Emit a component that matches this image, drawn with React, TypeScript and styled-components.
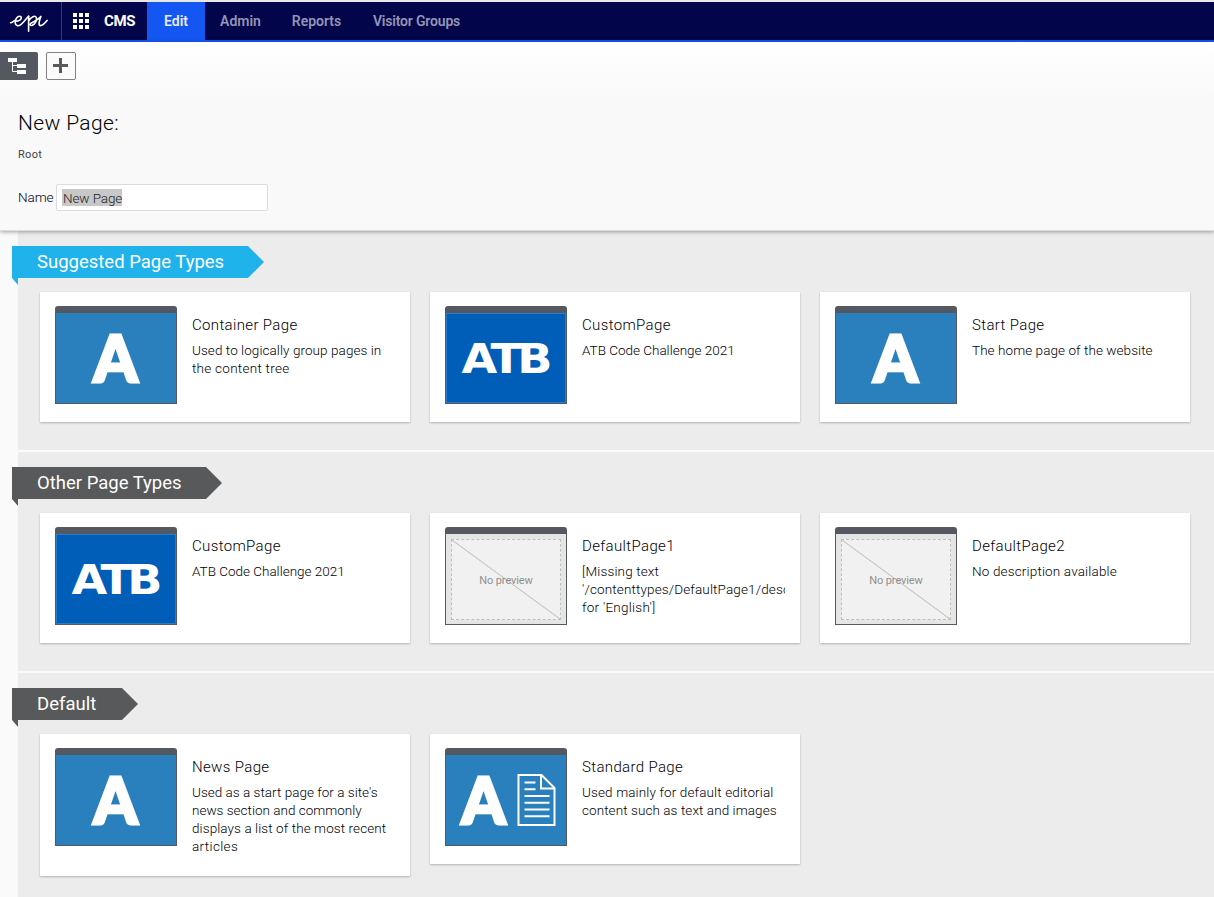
import React from "react";
import styled, { createGlobalStyle } from "styled-components";

const GlobalStyle = createGlobalStyle`
  * { box-sizing: border-box; }
  html, body { margin: 0; height: 100%; overflow: hidden; }
  body {
    background: #fafafa;
    font-family: Roboto, "Liberation Sans", sans-serif;
    color: #000008;
  }
`;

const Shell = styled.div`
  display: flex;
  flex-direction: column;
  height: 897px;
  overflow: hidden;
`;

const NavBar = styled.nav`
  display: flex;
  flex: none;
  height: 42px;
  border-top: 2px solid #e9e9ec;
  border-bottom: 2px solid #1456f1;
  background: #02054a;
`;

const LogoCell = styled.div`
  width: 62px;
  padding: 10px 0 0 9px;
  border-right: 1px solid #35386f;
`;

const ProductCell = styled.div`
  display: flex;
  align-items: center;
  width: 86px;
  padding-left: 11px;
  border-right: 1px solid #35386f;
  color: #fff;
  font-size: 15px;
  font-weight: 700;
  letter-spacing: -0.3px;
  gap: 15px;
`;

const NavItem = styled.a<{ $active?: boolean; $width: number; $track?: number }>`
  display: flex;
  align-items: center;
  justify-content: center;
  width: ${(p) => p.$width}px;
  margin-left: ${(p) => (p.$active ? -1 : 0)}px;
  background: ${(p) => (p.$active ? "#1456f1" : "transparent")};
  color: ${(p) => (p.$active ? "#e6ecff" : "#9394b5")};
  font-size: 14px;
  font-weight: 600;
  letter-spacing: ${(p) => p.$track ?? 0}px;
`;

const Header = styled.header`
  position: relative;
  z-index: 1;
  flex: none;
  height: 189px;
  padding-top: 10px;
  border-bottom: 1px solid #dcdcdc;
  background: linear-gradient(#ffffff, #f9f9f9 56px);
  box-shadow: 0 1px 4px rgba(0, 0, 0, 0.35);
`;

const Tools = styled.div`
  display: flex;
  gap: 8px;
  height: 28px;
`;

const TreeButton = styled.button`
  width: 38px;
  height: 28px;
  padding: 0;
  border: 0;
  border-radius: 0 2px 2px 0;
  background: #545961;
`;

const AddButton = styled.button`
  width: 30px;
  height: 28px;
  padding: 0;
  border: 1px solid #818181;
  border-radius: 2px;
  background: #fbfbfb;
`;

const Title = styled.h1`
  margin: 30px 0 0 18px;
  font-size: 21px;
  font-weight: 300;
  line-height: 26px;
  letter-spacing: 0.35px;
  color: #000;
`;

const Crumb = styled.div`
  margin: 12px 0 0 18px;
  font-size: 11px;
  line-height: 14px;
  letter-spacing: 0.3px;
  color: #444;
`;

const NameField = styled.label`
  display: flex;
  align-items: center;
  gap: 3px;
  height: 27px;
  margin: 22px 0 0 18px;
  font-size: 13.5px;
  font-weight: 300;
  letter-spacing: -0.1px;
  color: #000018;
`;

const NameCaption = styled.span`
  width: 35px;
  padding-bottom: 2px;
  white-space: nowrap;
`;

const NameInput = styled.div`
  display: flex;
  align-items: center;
  width: 212px;
  height: 27px;
  padding-left: 5px;
  border: 1px solid #dcdcdc;
  border-radius: 2px;
  background: #fff;
`;

const SelectedText = styled.span`
  width: 60px;
  height: 17px;
  padding-left: 1px;
  background: #c8c8c8;
  color: #222;
  line-height: 19px;
  white-space: nowrap;
`;

const Main = styled.main`
  flex: 1;
  min-height: 0;
  padding-left: 18px;
`;

const Section = styled.section`
  height: 221px;
  padding-top: 15px;
  border-bottom: 2px solid #fbfbfb;
  background: #ececec;

  &:last-child {
    height: 300px;
  }
`;

const Ribbon = styled.h2<{ $color: string; $width: number }>`
  width: ${(p) => p.$width}px;
  height: 39px;
  margin: 0 0 7px -6px;
  padding-left: 25px;
  background: ${(p) => p.$color};
  clip-path: polygon(
    0 0,
    calc(100% - 16px) 0,
    100% 16px,
    calc(100% - 16px) 32px,
    6px 32px,
    6px 39px,
    0 32px
  );
  color: #fff;
  font-size: 18.5px;
  font-weight: 400;
  line-height: 32px;
  white-space: nowrap;
`;

const CardGrid = styled.div`
  display: grid;
  grid-template-columns: repeat(3, 370px);
  align-items: start;
  gap: 20px;
  padding-left: 22px;
`;

const Card = styled.article`
  display: flex;
  align-items: flex-start;
  gap: 15px;
  min-height: 130px;
  padding: 14px 15px 18px;
  background: #fff;
  box-shadow: 0 1px 2px rgba(0, 0, 0, 0.25);
`;

const Thumb = styled.div<{ $fill: string }>`
  flex: none;
  width: 122px;
  height: 98px;
  border: 1px solid #545961;
  border-top-width: 7px;
  border-radius: 3px 3px 0 0;
  background: ${(p) => p.$fill};
`;

const CardText = styled.div`
  flex: 1;
  min-width: 0;
  overflow: hidden;
  padding: 9px 0 3px;
`;

const CardTitle = styled.h3`
  margin: 0 0 6px;
  font-size: 15px;
  font-weight: 300;
  line-height: 20px;
  letter-spacing: 0.35px;
`;

const CardLine = styled.div<{ $track: number }>`
  font-size: 13.5px;
  font-weight: 300;
  line-height: 18px;
  letter-spacing: ${(p) => p.$track}px;
  white-space: nowrap;
`;

const Drawing = styled.svg`
  display: block;
`;

const EmptyFrame = styled.div`
  display: grid;
  place-items: center;
  width: 110px;
  height: 81px;
  margin: 5px;
  padding-top: 2px;
  border: 1px dashed #bfbfbf;
  background: linear-gradient(
    to top right,
    #f1f1f1 calc(50% - 0.9px),
    #cbcbc8 calc(50% - 0.3px),
    #cbcbc8 calc(50% + 0.3px),
    #f1f1f1 calc(50% + 0.9px)
  );
  color: #909090;
  font-size: 11px;
  letter-spacing: -0.1px;
`;

const EpiLogo = () => (
  <Drawing width="42" height="20" viewBox="0 0 42 20" fill="none" stroke="#fff" strokeWidth="1.6" strokeLinecap="round" strokeLinejoin="round">
    <path d="M1.500 10.800c1.700 0 2.800-1.500 4.200-2.300M6 9.200c3.300-.1 6.300-1.300 6.300-3.500 0-2-3-1.900-4.700.3-2 2.700-2 7.300 1.100 7.700 4.200.4 7.500-6.900 10.900-9.200" />
    <path d="M19.600 4v15.200M19.600 9c2.400-4.400 6.600-6 7.700-3.500 1.100 2.800-1.300 7.200-4.200 7.900-1.900.4-2.600-1.200-1.300-2.100 2.700-1.400 6.900-3.200 10.100-6.900-1.500 4-2.900 8.700-.7 9.200 2.200.4 4.500-2.400 6.900-5.200" />
  </Drawing>
);

const AppGrid = () => (
  <Drawing width="16" height="16" viewBox="0 0 16 16" fill="#fff">
    {[0, 6, 12].map((y) => [0, 6, 12].map((x) => <rect key={`${x}-${y}`} x={x} y={y} width="4" height="4" />))}
  </Drawing>
);

const TreeIcon = () => (
  <Drawing width="38" height="28" viewBox="0 0 38 28">
    <path d="M8 6h9v4H8zM17 12h9v4h-9zM17 18h9v4h-9z" fill="#fff" />
    <path d="M12.500 10v9.500H17M12.500 13.500H17" stroke="#fff" fill="none" />
  </Drawing>
);

const PlusIcon = () => (
  <Drawing width="28" height="26" viewBox="0 0 28 26">
    <path d="M12 5h3v6h6v3h-6v6h-3v-6H6v-3h6z" fill="#58595b" />
  </Drawing>
);

const LetterMark = ({ x }: { x: number }) => (
  <text
    transform={`translate(${x} 68.500) scale(0.98 1)`}
    textAnchor="middle"
    fontFamily="Lato"
    fontWeight="900"
    fontSize="64"
    fill="#fff"
    stroke="#fff"
    strokeWidth="3"
  >
    A
  </text>
);

const LetterThumb = () => (
  <Thumb $fill="#2980bd">
    <Drawing width="120" height="90" viewBox="0 0 120 90">
      <LetterMark x={59.5} />
    </Drawing>
  </Thumb>
);

const ArticleThumb = () => (
  <Thumb $fill="#2980bd">
    <Drawing width="120" height="90" viewBox="0 0 120 90">
      <LetterMark x={37.5} />
      <g fill="none" stroke="#fff" strokeWidth="2">
        <path d="M72.500 20h23l13 13v37h-36z" />
        <path d="M95 20v13.500h13.500" />
        <path d="M78.500 27.500h11M78.500 34.200h11M78.500 41h25M78.500 47.700h25M78.500 54.500h25M78.500 61.200h25" />
      </g>
    </Drawing>
  </Thumb>
);

const AtbThumb = () => (
  <Thumb $fill="#005eb8">
    <Drawing width="120" height="90" viewBox="0 0 120 90">
      <rect x="0.500" y="0.500" width="119" height="89" fill="none" stroke="#2a7bc8" />
      <text x="13.700 39 62.500" y="60" transform="scale(1.14 1)" fontFamily="DejaVu Sans" fontWeight="700" fontSize="40.500" fill="#fff">
        ATB
      </text>
    </Drawing>
  </Thumb>
);

const EmptyThumb = () => (
  <Thumb $fill="#e5e5e5">
    <EmptyFrame>No preview</EmptyFrame>
  </Thumb>
);

const thumbs = { letter: LetterThumb, atb: AtbThumb, empty: EmptyThumb, article: ArticleThumb };

type PageType = {
  thumb: keyof typeof thumbs;
  title: string;
  lines: [string, number][];
};

type Group = { name: string; color: string; width: number; items: PageType[] };

const groups: Group[] = [
  {
    name: "Suggested Page Types",
    color: "#1fb2eb",
    width: 252,
    items: [
      {
        thumb: "letter",
        title: "Container Page",
        lines: [
          ["Used to logically group pages in", 0.07],
          ["the content tree", 0.27],
        ],
      },
      { thumb: "atb", title: "CustomPage", lines: [["ATB Code Challenge 2021", -0.01]] },
      { thumb: "letter", title: "Start Page", lines: [["The home page of the website", 0.07]] },
    ],
  },
  {
    name: "Other Page Types",
    color: "#58595b",
    width: 210,
    items: [
      { thumb: "atb", title: "CustomPage", lines: [["ATB Code Challenge 2021", -0.01]] },
      {
        thumb: "empty",
        title: "DefaultPage1",
        lines: [
          ["[Missing text", 0.15],
          ["'/contenttypes/DefaultPage1/description'", 0.14],
          ["for 'English']", 0.25],
        ],
      },
      { thumb: "empty", title: "DefaultPage2", lines: [["No description available", 0.16]] },
    ],
  },
  {
    name: "Default",
    color: "#58595b",
    width: 126,
    items: [
      {
        thumb: "letter",
        title: "News Page",
        lines: [
          ["Used as a start page for a site's", 0.02],
          ["news section and commonly", 0.01],
          ["displays a list of the most recent", 0.09],
          ["articles", 0.35],
        ],
      },
      {
        thumb: "article",
        title: "Standard Page",
        lines: [
          ["Used mainly for default editorial", 0.13],
          ["content such as text and images", 0.08],
        ],
      },
    ],
  },
];

const PageCard = ({ item }: { item: PageType }) => {
  const Picture = thumbs[item.thumb];
  return (
    <Card>
      <Picture />
      <CardText>
        <CardTitle>{item.title}</CardTitle>
        {item.lines.map(([text, track]) => (
          <CardLine key={text} $track={track}>
            {text}
          </CardLine>
        ))}
      </CardText>
    </Card>
  );
};

export default function App() {
  return (
    <Shell>
      <GlobalStyle />
      <NavBar>
        <LogoCell>
          <EpiLogo />
        </LogoCell>
        <ProductCell>
          <AppGrid />
          CMS
        </ProductCell>
        <NavItem $active $width={58}>Edit</NavItem>
        <NavItem $width={71}>Admin</NavItem>
        <NavItem $width={81}>Reports</NavItem>
        <NavItem $width={119} $track={-0.18}>Visitor Groups</NavItem>
      </NavBar>
      <Header>
        <Tools>
          <TreeButton aria-label="Toggle tree">
            <TreeIcon />
          </TreeButton>
          <AddButton aria-label="Add">
            <PlusIcon />
          </AddButton>
        </Tools>
        <Title>New Page:</Title>
        <Crumb>Root</Crumb>
        <NameField>
          <NameCaption>Name</NameCaption>
          <NameInput>
            <SelectedText>New Page</SelectedText>
          </NameInput>
        </NameField>
      </Header>
      <Main>
        {groups.map((group) => (
          <Section key={group.name}>
            <Ribbon $color={group.color} $width={group.width}>
              {group.name}
            </Ribbon>
            <CardGrid>
              {group.items.map((item) => (
                <PageCard key={item.title} item={item} />
              ))}
            </CardGrid>
          </Section>
        ))}
      </Main>
    </Shell>
  );
}
